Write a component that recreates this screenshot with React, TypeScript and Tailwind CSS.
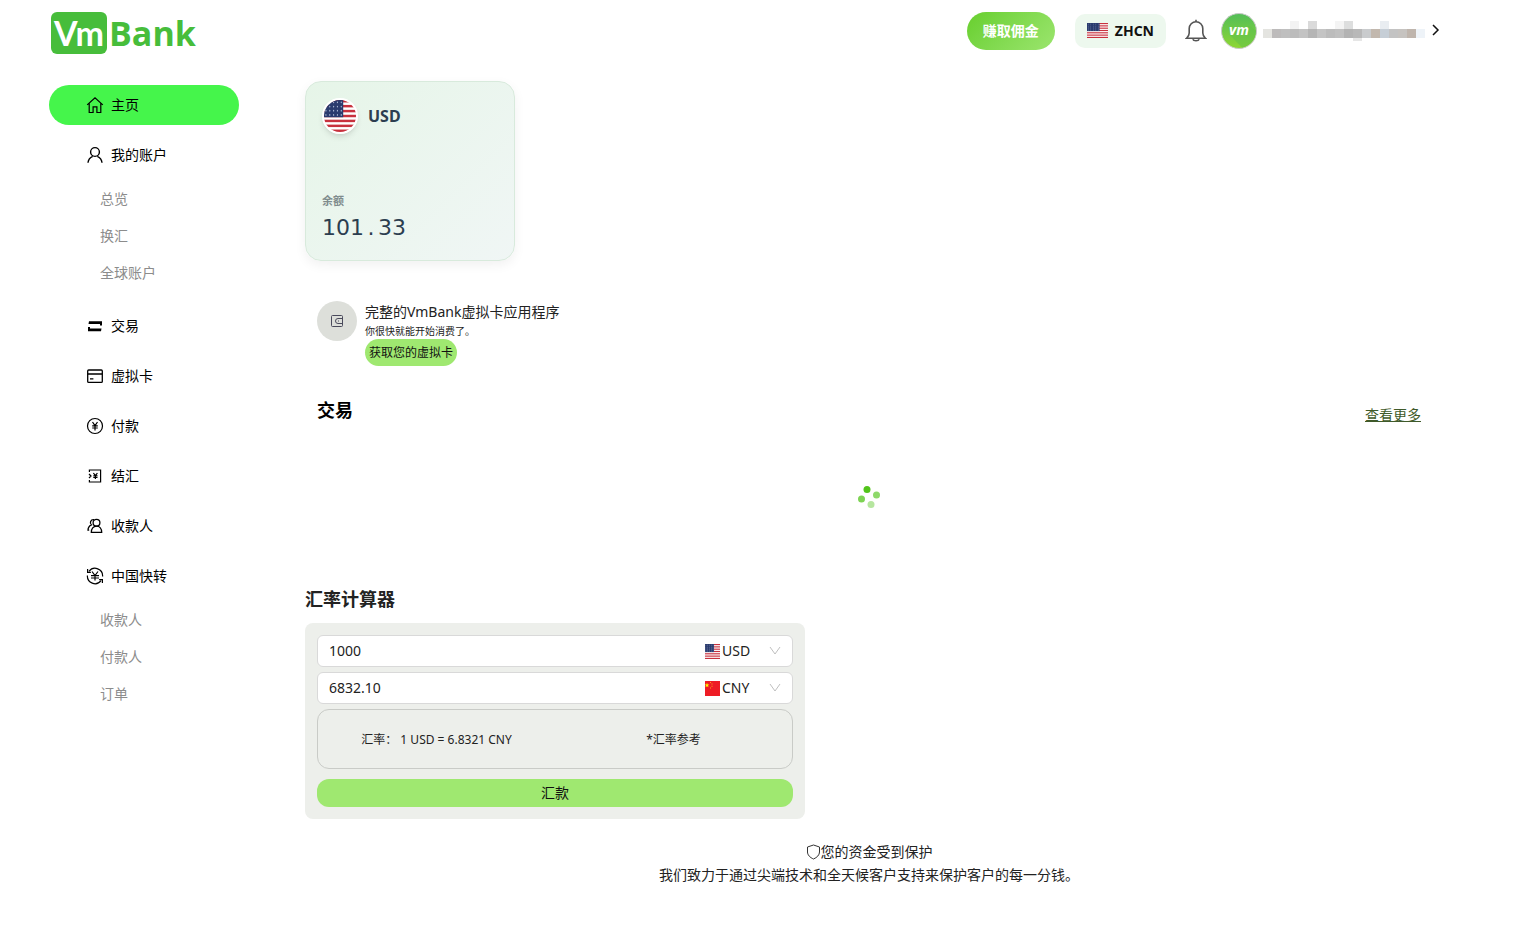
import type { ReactNode } from "react";

type NavEntry = {
  id: string;
  label: string;
  icon: ReactNode;
  active?: boolean;
  children?: string[];
};

const stroke = {
  width: 18,
  height: 18,
  viewBox: "0 0 18 18",
  fill: "none",
  stroke: "currentColor",
  strokeWidth: 1.2,
  "aria-hidden": true,
} as const;

function HomeIcon() {
  return (
    <svg {...stroke}>
      <path d="M1.2 8.9 9 1.7l7.8 7.2M3.2 7.4v9.1h3.9v-5.6h3.8v5.6h3.9V7.4" />
    </svg>
  );
}

function UserIcon() {
  return (
    <svg {...stroke} strokeWidth={1.4}>
      <circle cx="9" cy="6" r="4.4" />
      <path d="M2 16.800c.3-3.300 2.400-5.400 4.700-6.400M11.300 10.400c2.300 1 4.400 3.100 4.700 6.400" />
    </svg>
  );
}

function SwapIcon() {
  return (
    <svg {...stroke} fill="currentColor" stroke="none">
      <path d="M3 4.300h13v4.200h-2V7H2.500z" />
      <path d="M15 14.300H2v-4.200h2v1.500h11.500z" />
    </svg>
  );
}

function CardIcon() {
  return (
    <svg {...stroke} strokeWidth={1.3}>
      <rect x="1.7" y="3" width="14.6" height="12.4" rx="1" />
      <path d="M1.700 7h14.600M4 11.800h3.400" />
    </svg>
  );
}

function PayIcon() {
  return (
    <svg {...stroke}>
      <circle cx="9" cy="9" r="7.5" />
      <path d="m6.500 5 2.500 3.600L11.500 5M9 8.600v4.800M6.200 8.800h5.600M6.200 11h5.600" />
    </svg>
  );
}

function SettleIcon() {
  return (
    <svg {...stroke}>
      <path d="M3.400 5V3h11.200v12H3.400v-2M3 7l2 2-2 2" />
      <path d="m7.400 6 2 2.700 2-2.700M9.400 8.700V12M7.300 8.900h4.200M7.300 10.500h4.200" />
    </svg>
  );
}

function PeopleIcon() {
  return (
    <svg {...stroke} strokeWidth={1.3}>
      <circle cx="10.5" cy="5.7" r="3.4" />
      <path d="M5.300 15.400c0-3.600 2-6.300 5.200-6.300s5.200 2.700 5.200 6.300zM8 2.700c-3.400-.4-4.700 3.200-2.600 5.200C3.400 8.900 2 11 2 13.200h1.200" />
    </svg>
  );
}

function TransferIcon() {
  return (
    <svg {...stroke}>
      <path d="M3 4.300A7.600 7.600 0 0 1 16.600 9.500M15 13.700A7.600 7.600 0 0 1 1.400 8.500" />
      <path d="M1.600 2v3.300h3.300M16.400 16v-3.300h-3.300" />
      <path d="m6 4.500 3 4 3-4M9 8.500v5M5 8.700h8M5 11h8" />
    </svg>
  );
}

function BellIcon() {
  return (
    <svg width="22" height="24" viewBox="0 0 22 24" fill="none" stroke="#555" strokeWidth="1.6" aria-hidden="true">
      <path d="M1.500 19.300h19c-1.800-1.400-2.700-2.800-2.700-5.200V9.500a6.800 6.800 0 0 0-13.600 0v4.600c0 2.400-.9 3.800-2.700 5.200z" />
      <path d="M11 2.700V.8M7.800 20.300c.7 1.900 5.700 1.900 6.400 0" />
    </svg>
  );
}

function ChevronDown() {
  return (
    <svg
      width="12"
      height="10"
      viewBox="0 0 12 10"
      fill="none"
      stroke="#bfbfbf"
      className="pointer-events-none absolute right-0 top-1/2 -translate-y-1/2"
      aria-hidden="true"
    >
      <path d="m1 1 5 7 5-7" />
    </svg>
  );
}

function UsFlag({ width, className }: { width: number; className: string }) {
  const canton = width * 0.6;
  const stars = Array.from({ length: 20 }, (_, i) => i);
  return (
    <svg viewBox={`0 0 ${width} 26`} preserveAspectRatio="none" className={className} aria-hidden="true">
      <rect width={width} height="26" fill="#fff" />
      {[0, 4, 8, 12, 16, 20, 24].map((y) => (
        <rect key={y} y={y} width={width} height="2" fill="#c8313e" />
      ))}
      <rect width={canton} height="14" fill="#2a3b6e" />
      {stars.map((i) => (
        <circle
          key={i}
          cx={(((i % 5) + 0.5) * canton) / 5}
          cy={Math.floor(i / 5) * 3.4 + 1.9}
          r="0.7"
          fill="#aab6d3"
        />
      ))}
    </svg>
  );
}

function CnFlag({ className }: { className: string }) {
  return (
    <svg viewBox="0 0 15 15" className={className} aria-hidden="true">
      <rect width="15" height="15" fill="#ee1c25" />
      <path d="m2 1.800.6 1.600h1.700L3 4.500 3.500 6.200 2 5.200.5 6.200 1 4.500-.3 3.400h1.700z" fill="#ff0" />
      <path d="M5 1h1v1H5zM6.500 2.600h1v1h-1zM6.500 4.800h1v1h-1zM5 6.400h1v1H5z" fill="#f9a01b" />
    </svg>
  );
}

const navigation: NavEntry[] = [
  { id: "home", label: "主页", icon: <HomeIcon />, active: true },
  { id: "account", label: "我的账户", icon: <UserIcon />, children: ["总览", "换汇", "全球账户"] },
  { id: "transactions", label: "交易", icon: <SwapIcon /> },
  { id: "cards", label: "虚拟卡", icon: <CardIcon /> },
  { id: "pay", label: "付款", icon: <PayIcon /> },
  { id: "settle", label: "结汇", icon: <SettleIcon /> },
  { id: "payees", label: "收款人", icon: <PeopleIcon /> },
  { id: "china", label: "中国快转", icon: <TransferIcon />, children: ["收款人", "付款人", "订单"] },
];

const nameTop = ["", "", "", "#f3f3f3", "", "#dadada", "", "", "#f4f4f4", "#dddede", "", "", "", "#e9edf1", "", "", "", ""];
const nameMiddle = [
  "#e4e4e0", "#bdbbbb", "#bfbfbf", "#bcbcbc", "#c3c3c3", "#b5b5b5", "#c4c4c4", "#bcbcbc", "#c0c0c0",
  "#b3b3b3", "#b8b8b8", "#c9cbcd", "#c2b8ae", "#c6ced6", "#c3c3c3", "#c6c3c0", "#bfb5ad", "#eef3f8",
];

function MaskedName() {
  return (
    <svg width="164" height="20" viewBox="0 0 164 20" role="img" aria-label="账户名称" className="ml-1">
      {nameMiddle.map((fill, i) => (
        <rect key={i} x={i * 9 + 2} y="8" width="9" height="9" fill={fill} />
      ))}
      {nameTop.map((fill, i) => (fill ? <rect key={i} x={i * 9 + 2} width="9" height="8" fill={fill} /> : null))}
      <rect x="92" y="17" width="9" height="3" fill="#e6e6e6" />
    </svg>
  );
}

function Avatar() {
  return (
    <svg width="36" height="36" viewBox="0 0 36 36" className="ml-3.5" aria-hidden="true">
      <defs>
        <linearGradient id="avatar" x1="0" y1="0" x2="0" y2="1">
          <stop offset="0" stopColor="#52bd58" />
          <stop offset="1" stopColor="#8ed733" />
        </linearGradient>
      </defs>
      <circle cx="18" cy="18" r="17.5" fill="url(#avatar)" stroke="#c9c9c9" />
      <path d="m8 21 13 13.600A17 17 0 0 0 35 18l-6-5z" fill="#5fbf4c" opacity=".5" />
      <text x="18" y="22" textAnchor="middle" fill="#fff" fontSize="14" fontWeight="700" fontStyle="italic">
        vm
      </text>
    </svg>
  );
}

function Header() {
  return (
    <header className="flex h-[61px] items-center justify-between pl-[51px] pr-[72px]">
      <a href="#" className="mt-1 flex items-center font-['Open_Sans']" aria-label="VmBank">
        <span className="flex h-[42px] w-14 items-center justify-center rounded-md bg-[#47bd3b] font-[Lato] text-[34px] font-bold leading-none text-white">
          Vm
        </span>
        <span className="ml-0.5 text-[34px] font-bold leading-10 text-[#47bd3b]">Bank</span>
      </a>
      <div className="flex items-center">
        <button className="h-[38px] w-[88px] rounded-full bg-linear-135 from-[#67cf2b] to-[#9be56d] font-bold text-white">
          赚取佣金
        </button>
        <button className="ml-5 flex h-[34px] items-center gap-[7px] rounded-[10px] bg-[#edf8ee] px-3 font-bold text-[#111]">
          <UsFlag width={40} className="h-[15px] w-[21px]" />
          ZHCN
        </button>
        <button className="ml-[19px]" aria-label="通知">
          <BellIcon />
        </button>
        <button className="flex items-center" aria-label="用户菜单">
          <Avatar />
          <MaskedName />
          <svg width="10" height="14" viewBox="0 0 10 14" fill="none" stroke="#111" strokeWidth="1.5" className="ml-1.5" aria-hidden="true">
            <path d="m2 1 5 5-5 5" />
          </svg>
        </button>
      </div>
    </header>
  );
}

function Sidebar() {
  return (
    <nav className="mt-6 w-[190px] shrink-0">
      <ul className="flex flex-col gap-2.5">
        {navigation.map((item) => (
          <li key={item.id}>
            <a
              href="#"
              className={`flex h-10 items-center gap-[7px] rounded-full pl-[37px] text-black ${item.active ? "bg-[#45f54b]" : ""}`}
            >
              {item.icon}
              {item.label}
            </a>
            {item.children && (
              <ul className="my-[5px]">
                {item.children.map((child) => (
                  <li key={child}>
                    <a href="#" className="flex h-[37px] items-center pl-[51px] text-[#8c8c8c]">
                      {child}
                    </a>
                  </li>
                ))}
              </ul>
            )}
          </li>
        ))}
      </ul>
    </nav>
  );
}

function BalanceCard() {
  return (
    <section className="flex h-[180px] w-[210px] flex-col justify-between rounded-2xl border border-[#d8eadc] bg-linear-135 from-[#e6f5e8] to-[#f0f6f5] p-4 shadow-[0_4px_12px_rgba(0,0,0,0.06)]">
      <div className="flex items-center gap-2.5 text-base font-bold text-[#2c3e50]">
        <UsFlag width={36} className="size-9 rounded-full border-2 border-white shadow-md" />
        USD
      </div>
      <div>
        <p className="text-[11px] font-semibold leading-4 text-[#7f8c8d]">余额</p>
        <p className="mt-[3px] font-['DejaVu_Sans'] text-[22px] leading-8 text-[#2c3e50]">
          101<span className="inline-block w-3.5 text-center">.</span>33
        </p>
      </div>
    </section>
  );
}

function VirtualCardPromo() {
  return (
    <section className="mt-10 flex gap-2 px-3">
      <div className="flex size-10 items-center justify-center rounded-full bg-[#dddfda]">
        <svg width="14" height="14" viewBox="0 0 14 14" fill="none" stroke="#4a4a5c" aria-hidden="true">
          <rect x="1.5" y="1.5" width="11" height="11" rx="1" />
          <path d="M12.500 4.500H8a2.500 2.500 0 0 0 0 5h4.500M8 7h1" />
        </svg>
      </div>
      <div>
        <h2 className="leading-[22px]">完整的VmBank虚拟卡应用程序</h2>
        <p className="text-[10px] leading-4">你很快就能开始消费了。</p>
        <button className="flex h-[27px] items-center rounded-full bg-[#9fe870] px-1 text-xs text-[#111]">
          获取您的虚拟卡
        </button>
      </div>
    </section>
  );
}

function Transactions() {
  return (
    <section className="mt-[30px] px-3">
      <div className="flex h-[30px] justify-between">
        <h2 className="text-lg font-bold leading-7 text-black">交易</h2>
        <a href="#" className="self-end leading-[22px] text-[#3f5a2a] underline">
          查看更多
        </a>
      </div>
      <div className="flex h-[142px] items-center justify-center" role="status" aria-label="加载中">
        <svg width="24" height="24" viewBox="0 0 24 24" fill="#52c41a" aria-hidden="true">
          <circle cx="10" cy="4.5" r="3.5" />
          <circle cx="19.5" cy="10" r="3.5" opacity=".65" />
          <circle cx="4.5" cy="14" r="3.5" opacity=".75" />
          <circle cx="14" cy="19.5" r="3.5" opacity=".42" />
        </svg>
      </div>
    </section>
  );
}

type AmountFieldProps = {
  label: string;
  amount: string;
  currency: string;
  flag: ReactNode;
};

function AmountField({ label, amount, currency, flag }: AmountFieldProps) {
  return (
    <div className="flex h-8 items-center rounded-md border border-[#d9d9d9] bg-white px-[11px]">
      <input aria-label={label} defaultValue={amount} className="min-w-0 flex-1 bg-transparent outline-none" />
      {flag}
      <div className="relative ml-0.5 w-[59px]">
        <select aria-label={`${label}币种`} defaultValue={currency} className="w-full appearance-none bg-transparent outline-none">
          <option>USD</option>
          <option>CNY</option>
        </select>
        <ChevronDown />
      </div>
    </div>
  );
}

function RateCalculator() {
  return (
    <section className="mt-[17px]">
      <h2 className="text-lg font-bold leading-7">汇率计算器</h2>
      <form className="mt-2.5 max-w-[500px] rounded-lg bg-[#edefeb] p-3" onSubmit={(e) => e.preventDefault()}>
        <div className="flex flex-col gap-[5px]">
          <AmountField label="汇出金额" amount="1000" currency="USD" flag={<UsFlag width={26} className="size-[15px]" />} />
          <AmountField label="到账金额" amount="6832.10" currency="CNY" flag={<CnFlag className="size-[15px]" />} />
          <div className="grid h-15 grid-cols-2 items-center rounded-xl border border-[#c9cbc7] pt-0.5 text-center text-xs">
            <p>汇率： 1 USD = 6.8321 CNY</p>
            <p>*汇率参考</p>
          </div>
        </div>
        <button className="mt-2.5 h-7 w-full rounded-xl bg-[#9fe870] text-[#111]">汇款</button>
      </form>
    </section>
  );
}

export default function App() {
  return (
    <div className="min-h-screen bg-white font-['Noto_Sans','Noto_Sans_CJK_SC',sans-serif] text-sm text-[#222]">
      <Header />
      <div className="flex gap-[66px] pl-[49px] pr-20">
        <Sidebar />
        <main className="min-w-0 flex-1 pt-5">
          <BalanceCard />
          <VirtualCardPromo />
          <Transactions />
          <RateCalculator />
          <footer className="mt-[21px] text-center leading-[23px]">
            <p className="flex items-center justify-center">
              <svg width="15" height="16" viewBox="0 0 15 16" fill="none" stroke="#333" aria-hidden="true">
                <path d="M7.500 1 13.500 3v5c0 3-2.500 5.500-6 7-3.500-1.500-6-4-6-7V3z" />
              </svg>
              您的资金受到保护
            </p>
            <p>我们致力于通过尖端技术和全天候客户支持来保护客户的每一分钱。</p>
          </footer>
        </main>
      </div>
    </div>
  );
}
